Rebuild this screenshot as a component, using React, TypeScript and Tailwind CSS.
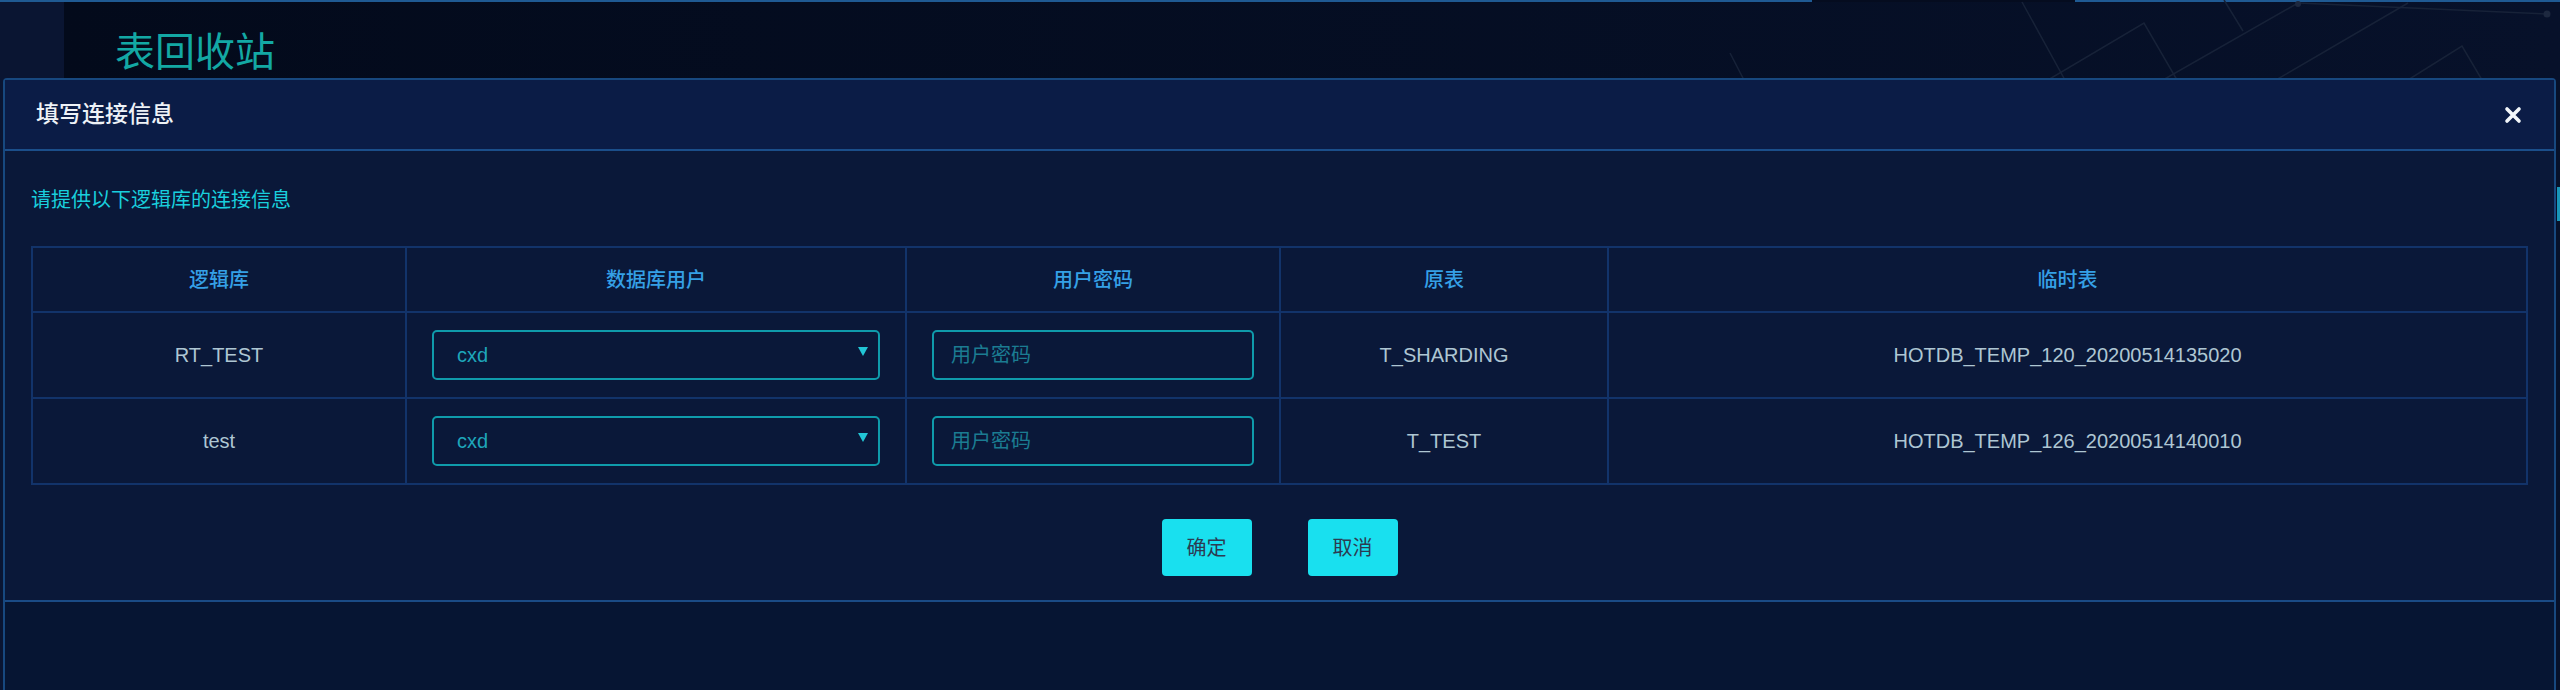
const rows = [
  { db: "RT_TEST", user: "cxd", src: "T_SHARDING", tmp: "HOTDB_TEMP_120_20200514135020" },
  { db: "test", user: "cxd", src: "T_TEST", tmp: "HOTDB_TEMP_126_20200514140010" },
];

const headers = ["逻辑库", "数据库用户", "用户密码", "原表", "临时表"];

function NetLines() {
  // decorative network drawing behind the modal, top right
  return (
    <svg className="absolute left-[1700px] top-0" width="860" height="80" viewBox="0 0 860 80">
      <g stroke="#172238" strokeWidth="1.5" fill="none">
        <path d="M30 53 L44 80" />
        <path d="M322 2 L365 80" />
        <path d="M348 80 L444 23 L477 80" />
        <path d="M524 0 L543 31" />
        <path d="M463 80 L598 3" />
        <path d="M576 80 L708 3" />
        <path d="M708 80 L762 46 L782 80" />
        <path d="M598 3 L847 14" />
      </g>
      <circle cx="598" cy="4" r="3" fill="#1d283f" />
      <circle cx="847" cy="14" r="3.5" fill="#1d283f" />
    </svg>
  );
}

function CloseIcon() {
  return (
    <svg width="18" height="18" viewBox="0 0 18 18">
      <path d="M3 3 L15 15 M15 3 L3 15" stroke="#f2f6fa" strokeWidth="3.6" strokeLinecap="round" />
    </svg>
  );
}

export default function App() {
  return (
    <div
      className="relative h-[690px] w-[2560px] overflow-hidden bg-[#050c1f]"
      style={{ fontFamily: '"Liberation Sans", "Noto Sans CJK SC", sans-serif' }}
    >
      {/* top accent line */}
      <div className="flex h-[2px]">
        <div className="w-[1812px] bg-[#1f5a93]" />
        <div className="w-[263px]" />
        <div className="flex-1 bg-[#1f5a93]" />
      </div>

      <div className="flex h-[688px]">
        <aside className="w-[64px] bg-[#0a1532]" />
        <main className="flex-1 bg-gradient-to-r from-[#030a1b] to-[#07112a] pl-[51px] pt-[28px]">
          <h1 className="text-[40px] leading-[44px] text-[#13a8a4]">表回收站</h1>
        </main>
      </div>

      <NetLines />

      {/* modal */}
      <div className="absolute bottom-0 left-[3px] top-[78px] flex w-[2553px] flex-col rounded-t-[4px] border-x-2 border-t-2 border-[#17487f] bg-[#061533]">
        <div className="flex h-[71px] items-center justify-between border-b-2 border-[#1b4e8a] bg-[#0b1c46] pl-[31px] pr-[32px]">
          <span className="text-[23px] font-medium text-[#eef2f7]">填写连接信息</span>
          <CloseIcon />
        </div>

        <div className="border-b-2 border-[#1a4b86] bg-[#0a1839] px-[26px] pb-[24px] pt-[35px]">
          <p className="text-[20px] leading-[28px] text-[#19cfdd]">请提供以下逻辑库的连接信息</p>

          <table className="mt-[32px] w-full table-fixed border-collapse text-[20px]">
            <colgroup>
              <col className="w-[374px]" />
              <col className="w-[500px]" />
              <col className="w-[374px]" />
              <col className="w-[328px]" />
              <col />
            </colgroup>
            <thead>
              <tr className="h-[65px]">
                {headers.map((h) => (
                  <th key={h} className="border-2 border-[#12336a] font-medium text-[#35a0e6]">
                    {h}
                  </th>
                ))}
              </tr>
            </thead>
            <tbody>
              {rows.map((r) => (
                <tr key={r.db} className="h-[86px] text-[#aec6d3]">
                  <td className="border-2 border-[#12336a] text-center">{r.db}</td>
                  <td className="border-2 border-[#12336a] px-[25px]">
                    <div className="relative">
                      <select
                        defaultValue={r.user}
                        className="h-[50px] w-full appearance-none rounded-[5px] border-2 border-[#0f9bab] bg-transparent pl-[23px] text-[20px] text-[#1ea6ba] outline-none"
                      >
                        <option value="cxd">cxd</option>
                      </select>
                      <span className="pointer-events-none absolute right-[12px] top-[17px] h-0 w-0 border-x-[5px] border-t-[9px] border-x-transparent border-t-[#22c6d6]" />
                    </div>
                  </td>
                  <td className="border-2 border-[#12336a] px-[25px]">
                    <input
                      placeholder="用户密码"
                      className="h-[50px] w-full rounded-[5px] border-2 border-[#0f9bab] bg-transparent pl-[17px] text-[20px] text-[#1ea6ba] outline-none placeholder:text-[#1b7c92]"
                    />
                  </td>
                  <td className="border-2 border-[#12336a] text-center">{r.src}</td>
                  <td className="border-2 border-[#12336a] text-center">{r.tmp}</td>
                </tr>
              ))}
            </tbody>
          </table>

          <div className="mt-[34px] flex justify-center gap-[56px]">
            <button className="h-[57px] w-[90px] rounded-[4px] bg-[#19e0ef] text-[20px] text-[#2c3b52]">确定</button>
            <button className="h-[57px] w-[90px] rounded-[4px] bg-[#19e0ef] text-[20px] text-[#2c3b52]">取消</button>
          </div>
        </div>
      </div>

      <div className="absolute left-[2557px] top-[187px] h-[34px] w-[3px] bg-[#1796b8]" />
    </div>
  );
}
